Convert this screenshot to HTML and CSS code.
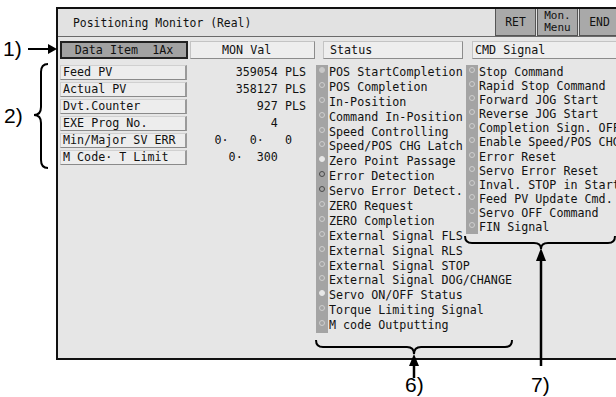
FILE: index.html
```html
<!DOCTYPE html>
<html lang="en">
<head>
  <meta charset="UTF-8" />
  <title>Positioning Monitor (Real)</title>
  <link rel="stylesheet" href="styles.css">
</head>
<body>
  <div class="page">
    <div class="screen">
      <div class="titlebar">
        <span class="title">Positioning Monitor (Real)</span>
        <div class="tbtns">
          <button class="tbtn">RET</button>
          <button class="tbtn two"><span>Mon.</span><span>Menu</span></button>
          <button class="tbtn">END</button>
        </div>
      </div>

      <div class="heads">
        <div class="hd hd-item">Data Item  1Ax</div>
        <div class="hd hd-val">MON Val</div>
        <div class="hd hd-status">Status</div>
        <div class="hd hd-cmd">CMD Signal</div>
      </div>

      <div class="main">
        <div class="data">
          <div class="drow"><span class="lbl">Feed PV</span><span class="val">359054 PLS</span></div>
          <div class="drow"><span class="lbl">Actual PV</span><span class="val">358127 PLS</span></div>
          <div class="drow"><span class="lbl">Dvt.Counter</span><span class="val">927 PLS</span></div>
          <div class="drow"><span class="lbl">EXE Prog No.</span><span class="val">4    </span></div>
          <div class="drow"><span class="lbl">Min/Major SV ERR</span><span class="val">0·   0·   0  </span></div>
          <div class="drow"><span class="lbl">M Code· T Limit</span><span class="val">0·  300    </span></div>
        </div>

        <div class="sig sig-status">
          <div class="srow"><span class="lamp fill"></span>POS StartCompletion</div>
          <div class="srow"><span class="lamp"></span>POS Completion</div>
          <div class="srow"><span class="lamp"></span>In-Position</div>
          <div class="srow"><span class="lamp"></span>Command In-Position</div>
          <div class="srow"><span class="lamp"></span>Speed Controlling</div>
          <div class="srow"><span class="lamp"></span>Speed/POS CHG Latch</div>
          <div class="srow"><span class="lamp on"></span>Zero Point Passage</div>
          <div class="srow"><span class="lamp dark"></span>Error Detection</div>
          <div class="srow"><span class="lamp dark"></span>Servo Error Detect.</div>
          <div class="srow"><span class="lamp"></span>ZERO Request</div>
          <div class="srow"><span class="lamp"></span>ZERO Completion</div>
          <div class="srow"><span class="lamp"></span>External Signal FLS</div>
          <div class="srow"><span class="lamp"></span>External Signal RLS</div>
          <div class="srow"><span class="lamp"></span>External Signal STOP</div>
          <div class="srow"><span class="lamp"></span>External Signal DOG/CHANGE</div>
          <div class="srow"><span class="lamp on"></span>Servo ON/OFF Status</div>
          <div class="srow"><span class="lamp"></span>Torque Limiting Signal</div>
          <div class="srow"><span class="lamp"></span>M code Outputting</div>
        </div>

        <div class="sig sig-cmd">
          <div class="srow"><span class="lamp"></span>Stop Command</div>
          <div class="srow"><span class="lamp"></span>Rapid Stop Command</div>
          <div class="srow"><span class="lamp"></span>Forward JOG Start</div>
          <div class="srow"><span class="lamp"></span>Reverse JOG Start</div>
          <div class="srow"><span class="lamp"></span>Completion Sign. OFF</div>
          <div class="srow"><span class="lamp"></span>Enable Speed/POS CHG</div>
          <div class="srow"><span class="lamp"></span>Error Reset</div>
          <div class="srow"><span class="lamp"></span>Servo Error Reset</div>
          <div class="srow"><span class="lamp"></span>Inval. STOP in Start</div>
          <div class="srow"><span class="lamp"></span>Feed PV Update Cmd.</div>
          <div class="srow"><span class="lamp"></span>Servo OFF Command</div>
          <div class="srow"><span class="lamp"></span>FIN Signal</div>
        </div>
      </div>
    </div>

    <!-- callout annotations -->
    <svg class="notes" width="616" height="397" viewBox="0 0 616 397">
      <g class="ntext">
        <text x="3" y="56">1)</text>
        <text x="4" y="123">2)</text>
        <text x="405" y="392">6)</text>
        <text x="531" y="392">7)</text>
      </g>
      <g fill="none" stroke="#000" stroke-width="2">
        <line x1="28" y1="49" x2="49" y2="49"/>
        <path d="M48,64 Q41,64 41,72 L41,107 Q41,115 34,115 Q41,115 41,123 L41,160 Q41,168 48,168"/>
        <path d="M316,340 Q316,347 323,347 L407,347 Q414,347 414,354 Q414,347 421,347 L505,347 Q512,347 512,340"/>
        <path d="M465,236 Q465,243 472,243 L534,243 Q541,243 541,249 Q541,243 548,243 L608,243 Q615,243 615,236"/>
        <line x1="414" y1="362" x2="414" y2="378" stroke-width="2.5"/>
        <line x1="541" y1="258" x2="541" y2="366" stroke-width="2.5"/>
      </g>
      <g fill="#000">
        <polygon points="48,44 57,49 48,54"/>
        <polygon points="414,354 409,366 419,366"/>
        <polygon points="541,248 536,261 546,261"/>
      </g>
    </svg>
  </div>
</body>
</html>
```

FILE: styles.css
```css
body {
  margin: 0;
  background: #fff;
  font-family: "DejaVu Sans Mono", "Liberation Mono", monospace;
  font-size: 11.7px;
  color: #111;
  overflow: hidden;
}

.page {
  position: relative;
  width: 616px;
  height: 397px;
  overflow: hidden;
}

.screen {
  box-sizing: border-box;
  margin: 7px 0 0 56px;
  width: 566px;
  height: 353px;
  border: 2px solid #111;
  border-right: none;
  background: #e6e6e6;
}

.titlebar {
  display: flex;
  align-items: stretch;
  height: 27px;
  padding-right: 2px;
  border-bottom: 1px solid #6a6a6a;
  background: #e2e2e2;
}

.title {
  align-self: center;
  padding-left: 15px;
  font-size: 11.4px;
}

.tbtns {
  display: flex;
  gap: 1px;
  margin-left: auto;
}

.tbtn {
  width: 41px;
  padding: 0;
  border: 1px solid #555;
  border-top: none;
  background: #a9a9a9;
  font-family: inherit;
  font-size: 11.4px;
  color: #111;
}

.tbtn.two {
  display: flex;
  flex-direction: column;
  align-items: center;
  justify-content: center;
  font-size: 11px;
  line-height: 12.5px;
}

.heads {
  display: flex;
  height: 18px;
  margin-top: 4px;
  padding-left: 2px;
}

.hd {
  box-sizing: border-box;
  display: flex;
  align-items: center;
  white-space: pre;
  background: #eeeeee;
  border: 1px solid #c4c4c4;
  border-right-color: #8c8c8c;
  border-bottom-color: #8c8c8c;
}

.hd-item {
  width: 128px;
  justify-content: center;
  border: 2px solid #222;
  background: #a2a2a2;
}

.hd-val {
  width: 125px;
  margin-left: 2px;
  padding-left: 31px;
}

.hd-status {
  width: 140px;
  margin-left: 8px;
  padding-left: 6px;
}

.hd-cmd {
  flex: 1;
  margin-left: 9px;
  padding-left: 2px;
}

.main {
  display: flex;
  align-items: flex-start;
  margin-top: 6px;
}

.data {
  width: 256px;
  padding-left: 2px;
}

.drow {
  display: flex;
  height: 15px;
  margin-bottom: 2px;
}

.lbl {
  box-sizing: border-box;
  width: 127px;
  padding-left: 2px;
  line-height: 13px;
  background: #ededed;
  border: 1px solid #d0d0d0;
  border-right: 2px solid #9a9a9a;
  border-bottom: 1px solid #8a8a8a;
}

.val {
  width: 117px;
  margin-left: 2px;
  text-align: right;
  white-space: pre;
  line-height: 15px;
}

.sig-status {
  width: 150px;
}

.sig-cmd {
  flex: 1;
  white-space: nowrap;
}

.srow {
  display: flex;
  height: 14.9px;
  line-height: 15px;
  white-space: pre;
}

.sig-cmd .srow {
  height: 14.1px;
  line-height: 14px;
}

.lamp {
  flex: none;
  position: relative;
  width: 12px;
  height: 100%;
  margin-right: 1px;
  background: #a4a4a4;
}

.lamp::after {
  content: "";
  position: absolute;
  left: 3px;
  top: 2px;
  box-sizing: border-box;
  width: 6px;
  height: 6px;
  border-radius: 50%;
  border: 1px solid #cfcfcf;
}

.lamp.fill::after {
  background: #c8c8c8;
  border-color: #c8c8c8;
}

.lamp.on::after {
  background: #e8e8e8;
  border-color: #e8e8e8;
}

.lamp.dark::after {
  border-color: #4a4a4a;
}

.notes {
  position: absolute;
  left: 0;
  top: 0;
  pointer-events: none;
}

.ntext {
  font-family: "Liberation Sans", Arial, sans-serif;
  font-size: 21px;
  fill: #000;
}
```
